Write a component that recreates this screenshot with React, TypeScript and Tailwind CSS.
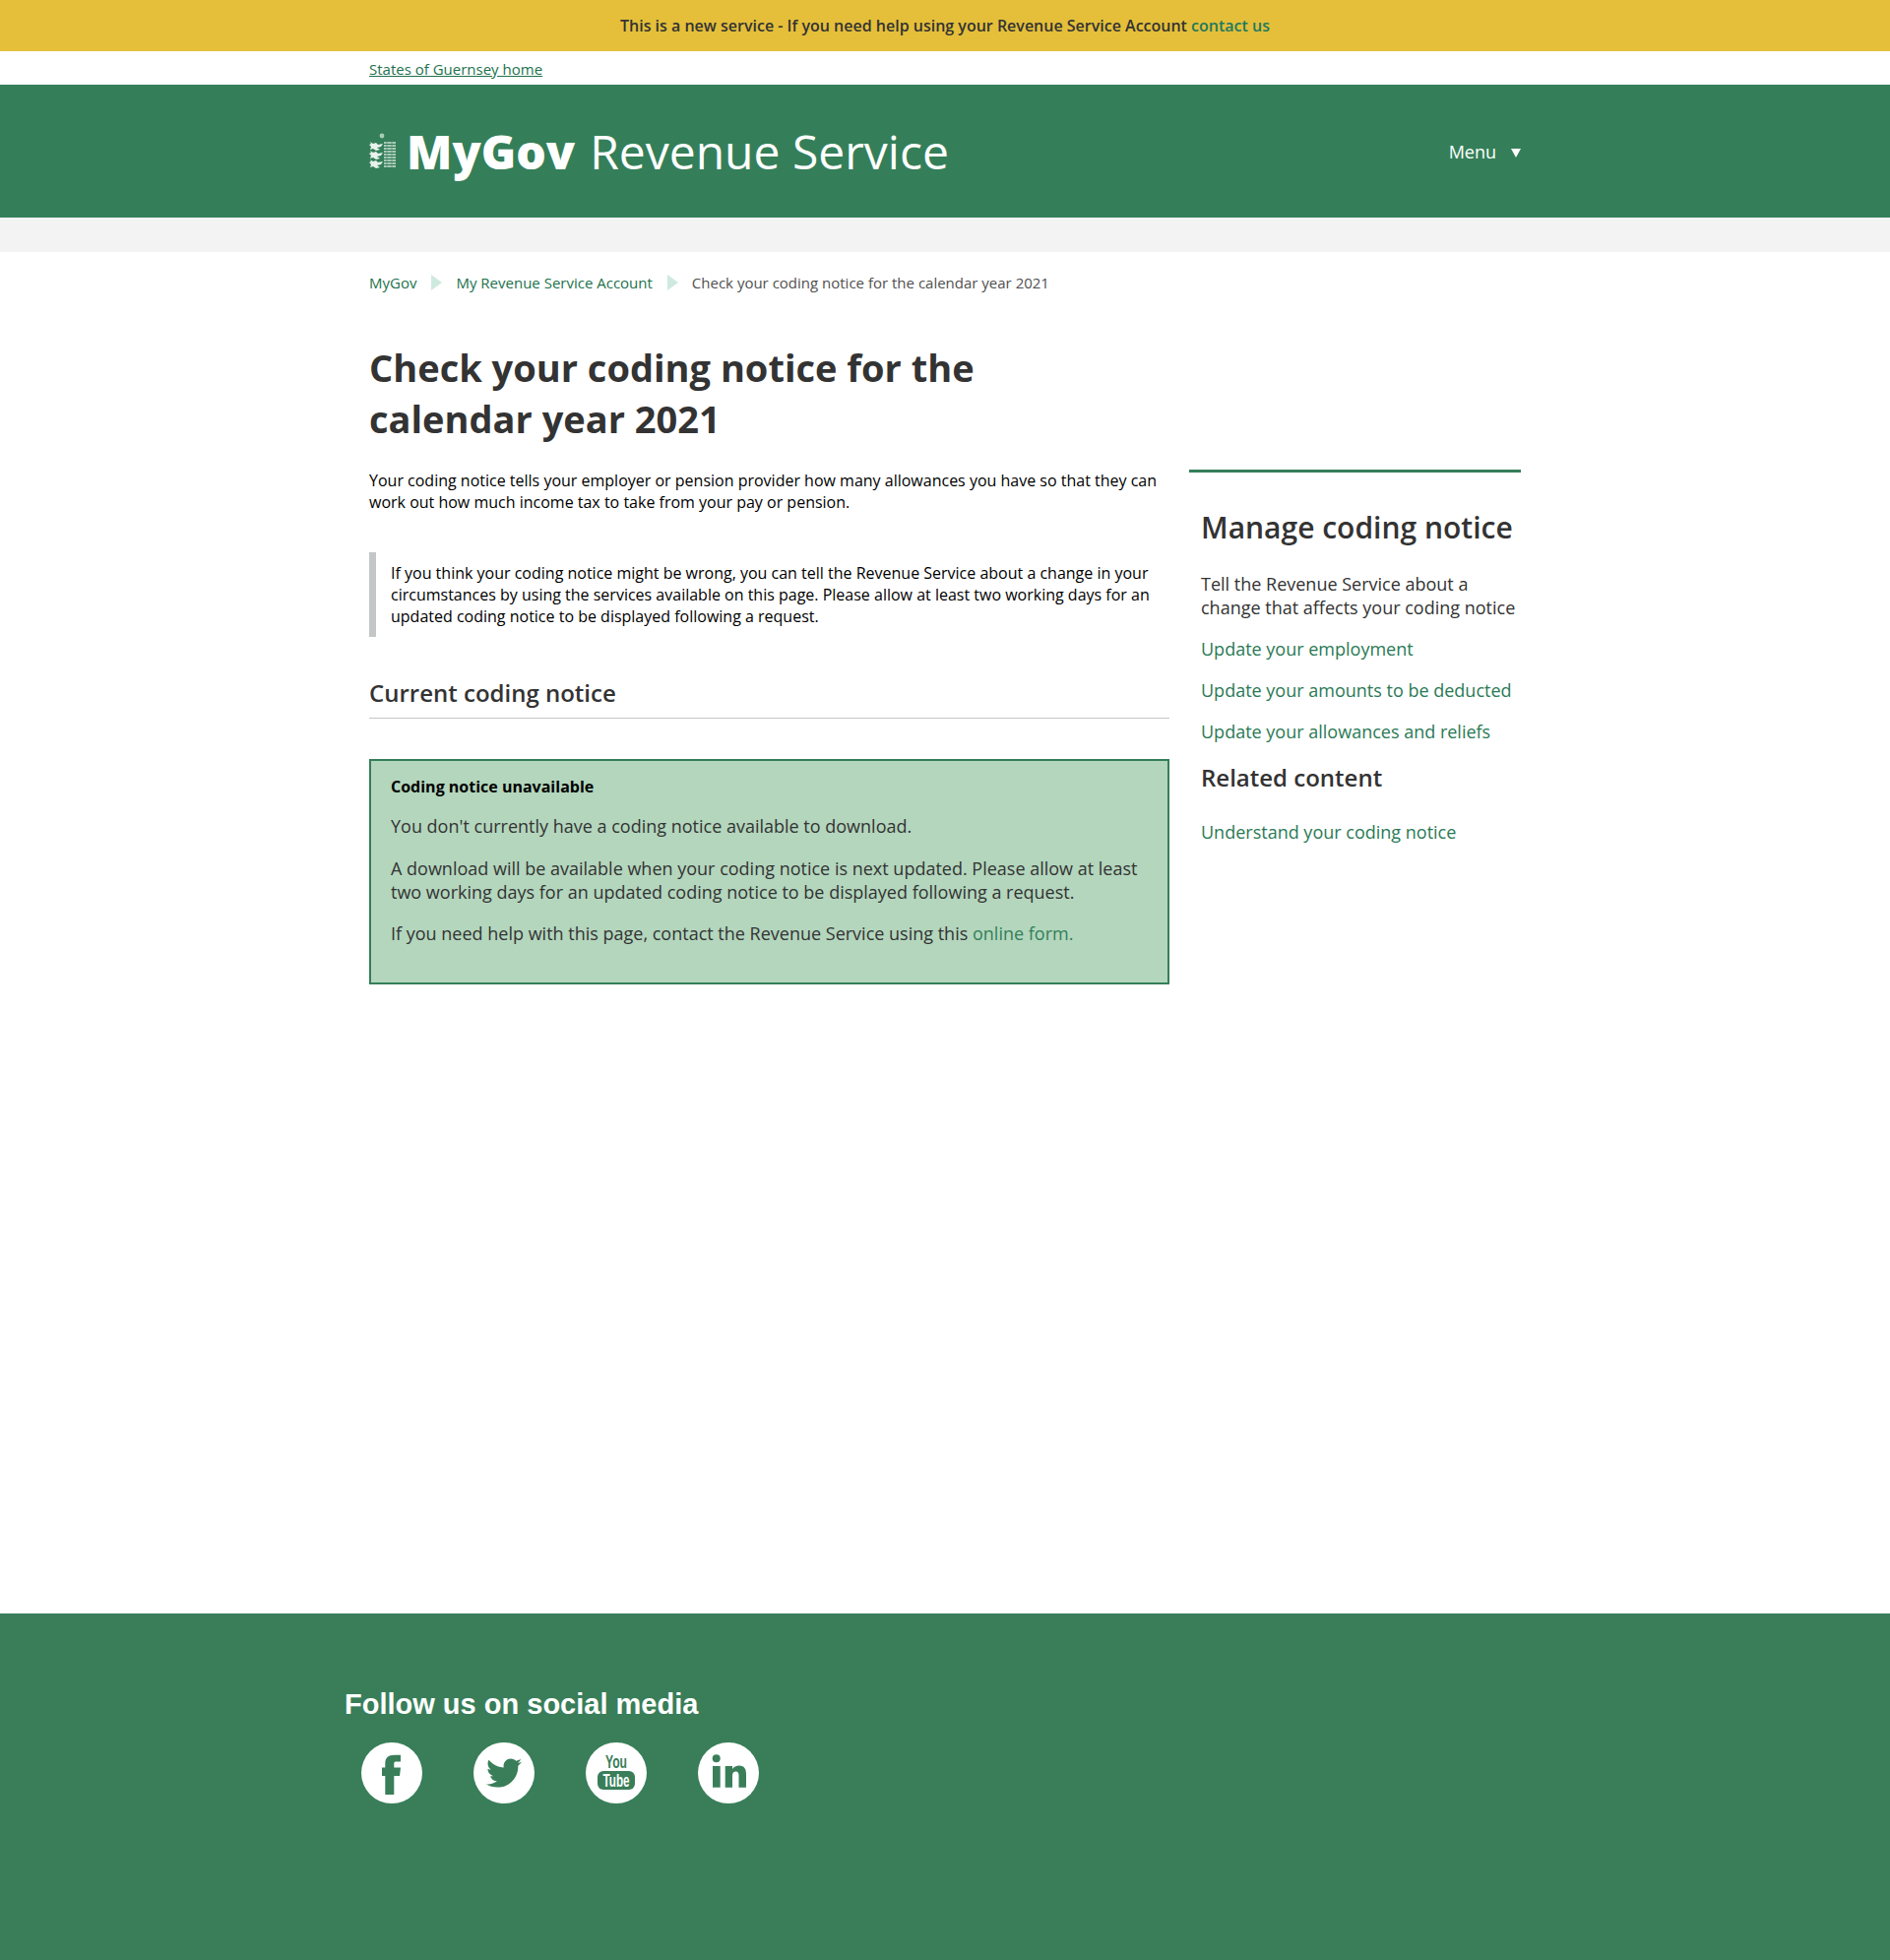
import React from 'react';
import { FaTwitter } from 'react-icons/fa';

const sideLinks = [
  'Update your employment',
  'Update your amounts to be deducted',
  'Update your allowances and reliefs',
];

// one row of the crest: a leopard on the left, bars on the right
const CrestRow = ({ y }: { y: number }) => (
  <g transform={`translate(0 ${y})`}>
    <path d="M1 1l3 2 3-1 2 2 5-1-2 3-4 1 3 2-4 1-3-2-3 1 1-3-2-2 2-1z" fill="#e8f2ec" />
    <path d="M15 2h12M15 5h12M15 8h12" stroke="#cfe3d8" strokeWidth="1.5" />
    <path d="M18 1v9M23 1v9" stroke="#347f59" strokeWidth="1" opacity="0.5" />
  </g>
);

const Crest = () => (
  <svg width="28" height="38" viewBox="0 0 28 38" className="shrink-0">
    <circle cx="13" cy="3" r="2.4" fill="#a9ccb9" />
    <CrestRow y={8} />
    <CrestRow y={17} />
    <CrestRow y={26} />
  </svg>
);

const Chevron = () => <span className="ml-[15px] mr-[14px] h-0 w-0 border-y-[8px] border-l-[11px] border-y-transparent border-l-[#cfe9df]" />;

const FacebookGlyph = () => (
  <svg width="62" height="62" viewBox="0 0 62 62" fill="currentColor">
    <path d="M33.3 53V34H39L40 25.5H33.3V21C33.3 19.5 34.5 19.5 36 19.5H40V12.7H34C27 12.7 24.3 16 24.3 21.5V25.5H21V34H24.3V53Z" />
  </svg>
);

const LinkedInGlyph = () => (
  <svg width="62" height="62" viewBox="0 0 62 62" fill="currentColor">
    <circle cx="18.7" cy="16.3" r="4" />
    <path d="M15 24H22.7V45.7H15Z" />
    <path d="M27.7 24H35V27C36.5 25 39 23.5 42 23.5C47 23.5 49 27 49 32V45.7H41.5V33.5C41.5 31 40.5 29.5 38.5 29.5C36.5 29.5 35 31 35 33.5V45.7H27.7Z" />
  </svg>
);

const YouTubeGlyph = () => (
  <svg width="62" height="62" viewBox="0 0 62 62">
    <text x="31" y="26" textAnchor="middle" textLength="22" lengthAdjust="spacingAndGlyphs" fontFamily="Liberation Sans, sans-serif" fontWeight="700" fontSize="19" fill="#397e59">You</text>
    <rect x="12" y="29" width="38" height="19" rx="6" fill="#397e59" />
    <text x="31" y="44.5" textAnchor="middle" textLength="27" lengthAdjust="spacingAndGlyphs" fontFamily="Liberation Sans, sans-serif" fontWeight="700" fontSize="17.5" fill="#fff">Tube</text>
  </svg>
);

const SocialIcon = ({ children }: { children: React.ReactNode }) => (
  <a className="flex h-[62px] w-[62px] items-center justify-center rounded-full bg-white text-[#397e59]">{children}</a>
);

export default function App() {
  return (
    <div className="flex min-h-[1991px] flex-col bg-white font-['Open_Sans',sans-serif] text-black">
      <div className="flex h-[52px] items-center justify-center bg-[#e5bf3a] text-[16px] font-semibold text-[#333333]">
        <p>This is a new service - If you need help using your Revenue Service Account <a className="text-[#1f7a5c]">contact us</a></p>
      </div>

      <div className="mx-auto h-[34px] w-[1170px] pt-[7px] text-[15px] leading-[22px]">
        <a className="text-[#22724d] underline">States of Guernsey home</a>
      </div>

      <header className="bg-[#347f59]">
        <div className="mx-auto flex h-[135px] w-[1170px] items-center justify-between">
          <div className="flex items-center text-white">
            <Crest />
            <span className="ml-[10px] text-[48px] font-extrabold leading-none">MyGov</span>
            <span className="ml-[15px] text-[48px] font-normal leading-none">Revenue Service</span>
          </div>
          <div className="flex items-center pt-[2px] text-[18px] text-white">
            Menu
            <span className="ml-[15px] mt-[2px] h-0 w-0 border-x-[5.5px] border-t-[9px] border-x-transparent border-t-white" />
          </div>
        </div>
      </header>
      <div className="h-[35px] bg-[#f3f3f3]" />

      <main className="mx-auto w-[1170px] flex-1">
        <nav className="flex h-[62px] items-center text-[15px] text-[#22724d]">
          <a>MyGov</a>
          <Chevron />
          <a>My Revenue Service Account</a>
          <Chevron />
          <span className="text-[#505050]">Check your coding notice for the calendar year 2021</span>
        </nav>

        <div className="flex gap-[20px]">
          <div className="w-[813px]">
            <h1 className="mt-[29px] text-[38px] font-bold leading-[52px] text-[#333333]">Check your coding notice for the<br />calendar year 2021</h1>
            <p className="mt-[26px] text-[16px] leading-[22px]">Your coding notice tells your employer or pension provider how many allowances you have so that they can work out how much income tax to take from your pay or pension.</p>
            <div className="mt-[40px] border-l-[7px] border-[#c4c6c8] py-[10px] pl-[15px] text-[16px] leading-[22px]">
              If you think your coding notice might be wrong, you can tell the Revenue Service about a change in your circumstances by using the services available on this page. Please allow at least two working days for an updated coding notice to be displayed following a request.
            </div>
            <h2 className="mt-[40px] border-b border-[#c4c6c8] pb-[9px] text-[24px] font-semibold leading-[33px] text-[#333333]">Current coding notice</h2>
            <div className="mt-[41px] h-[229px] border-2 border-[#347f59] bg-[#b3d6bd] px-[20px] pt-[14px] text-[18px] leading-[24px] text-[#333333]">
              <p className="text-[16px] font-bold text-black">Coding notice unavailable</p>
              <p className="mt-[16px]">You don't currently have a coding notice available to download.</p>
              <p className="mt-[19px]">A download will be available when your coding notice is next updated. Please allow at least two working days for an updated coding notice to be displayed following a request.</p>
              <p className="mt-[18px]">If you need help with this page, contact the Revenue Service using this <a className="text-[#347f59]">online form.</a></p>
            </div>
          </div>

          <aside className="mt-[159px] w-[337px] self-start border-t-[3px] border-[#347f59] pl-[12px]">
            <h2 className="mt-[34px] text-[30px] font-semibold leading-[44px] text-[#333333]">Manage coding notice</h2>
            <p className="mt-[23px] text-[18px] leading-[24px] text-[#333333]">Tell the Revenue Service about a change that affects your coding notice</p>
            {sideLinks.map((link) => (
              <a key={link} className="mt-[18px] block text-[18px] leading-[24px] text-[#2a7a55]">{link}</a>
            ))}
            <h3 className="mt-[18px] text-[24px] font-semibold leading-[33px] text-[#333333]">Related content</h3>
            <a className="mt-[27px] block text-[18px] leading-[24px] text-[#2a7a55]">Understand your coding notice</a>
          </aside>
        </div>
      </main>

      <footer className="h-[352px] bg-[#397e59] pl-[350px] pt-[76px]">
        <h2 className="font-['Liberation_Sans',sans-serif] text-[29px] font-bold leading-[32px] text-white">Follow us on social media</h2>
        <div className="ml-[17px] mt-[23px] flex gap-[52px]">
          <SocialIcon><FacebookGlyph /></SocialIcon>
          <SocialIcon><FaTwitter size={36} /></SocialIcon>
          <SocialIcon><YouTubeGlyph /></SocialIcon>
          <SocialIcon><LinkedInGlyph /></SocialIcon>
        </div>
      </footer>
    </div>
  );
}
